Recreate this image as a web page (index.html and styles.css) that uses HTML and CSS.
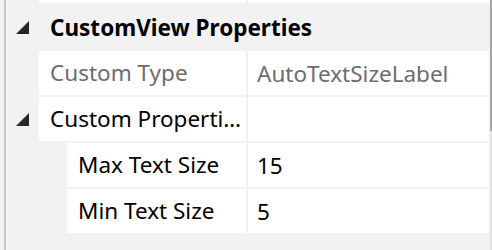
FILE: index.html
```html
<!DOCTYPE html>
<html lang="en">
<head>
    <meta charset="UTF-8">
    <title>Properties</title>
    <link rel="stylesheet" href="styles.css">
</head>
<body>
    <div class="panel">
        <div class="grid">
            <div class="row top">
                <div class="indent"></div>
                <div class="name"></div>
                <div class="value"></div>
            </div>

            <div class="category">
                <span class="expander"><svg width="13" height="13" viewBox="0 0 13 13"><polygon points="13,0 13,13 0,13"/></svg></span>
                <span class="category-title">CustomView Properties</span>
            </div>

            <div class="row readonly">
                <div class="indent"></div>
                <div class="name">Custom Type</div>
                <div class="value">AutoTextSizeLabel</div>
            </div>

            <div class="row">
                <div class="indent"><span class="expander"><svg width="13" height="13" viewBox="0 0 13 13"><polygon points="13,0 13,13 0,13"/></svg></span></div>
                <div class="name">Custom Properties</div>
                <div class="value"></div>
            </div>

            <div class="row nested">
                <div class="indent"></div>
                <div class="name">Max Text Size</div>
                <div class="value">15</div>
            </div>

            <div class="row nested">
                <div class="indent"></div>
                <div class="name">Min Text Size</div>
                <div class="value">5</div>
            </div>

            <div class="category">
                <span class="expander"><svg width="13" height="13" viewBox="0 0 13 13"><polygon points="13,0 13,13 0,13"/></svg></span>
                <span class="category-title"></span>
            </div>
        </div>

        <div class="scrollbar">
            <div class="thumb"></div>
        </div>
    </div>
</body>
</html>
```

FILE: styles.css
```css
body {
    margin: 0;
    background-color: #f2f2f2;
    font-family: "Noto Sans", "Open Sans", sans-serif;
    font-size: 22.5px;
    color: #000;
    overflow: hidden;
}

.panel {
    display: flex;
    height: 250px;
    overflow: hidden;
}

.grid {
    flex: 1;
    margin-left: 4px;
    border-left: 2px solid #c9c9c9;
    margin-right: 1px;
}

.row {
    display: flex;
    height: 44px;
    margin-bottom: 2px;
}

.row.top {
    height: 3px;
    margin-bottom: 0;
}

.indent {
    width: 33px;
    display: flex;
    align-items: center;
}

.nested .indent {
    width: 61px;
}

.name, .value {
    background-color: #fff;
    display: flex;
    align-items: center;
    white-space: nowrap;
    overflow: hidden;
}

.name {
    width: 194px;
    padding-left: 11px;
    padding-right: 2px;
    margin-right: 2px;
    text-overflow: ellipsis;
    display: block;
    line-height: 44px;
}

.nested .name {
    width: 166px;
}

.value {
    flex: 1;
    padding-left: 9px;
}

.readonly .name, .readonly .value {
    color: #6d6d6d;
}

.category {
    display: flex;
    align-items: center;
    height: 48px;
}

.expander {
    display: flex;
    padding-left: 10px;
    width: 23px;
}

.expander svg {
    fill: #262626;
}

.category-title {
    font-weight: bold;
    padding-left: 11px;
}

.scrollbar {
    width: 2px;
    background-color: #e3e3e3;
}

.thumb {
    height: 131px;
    background-color: #a6a6a6;
}
```
